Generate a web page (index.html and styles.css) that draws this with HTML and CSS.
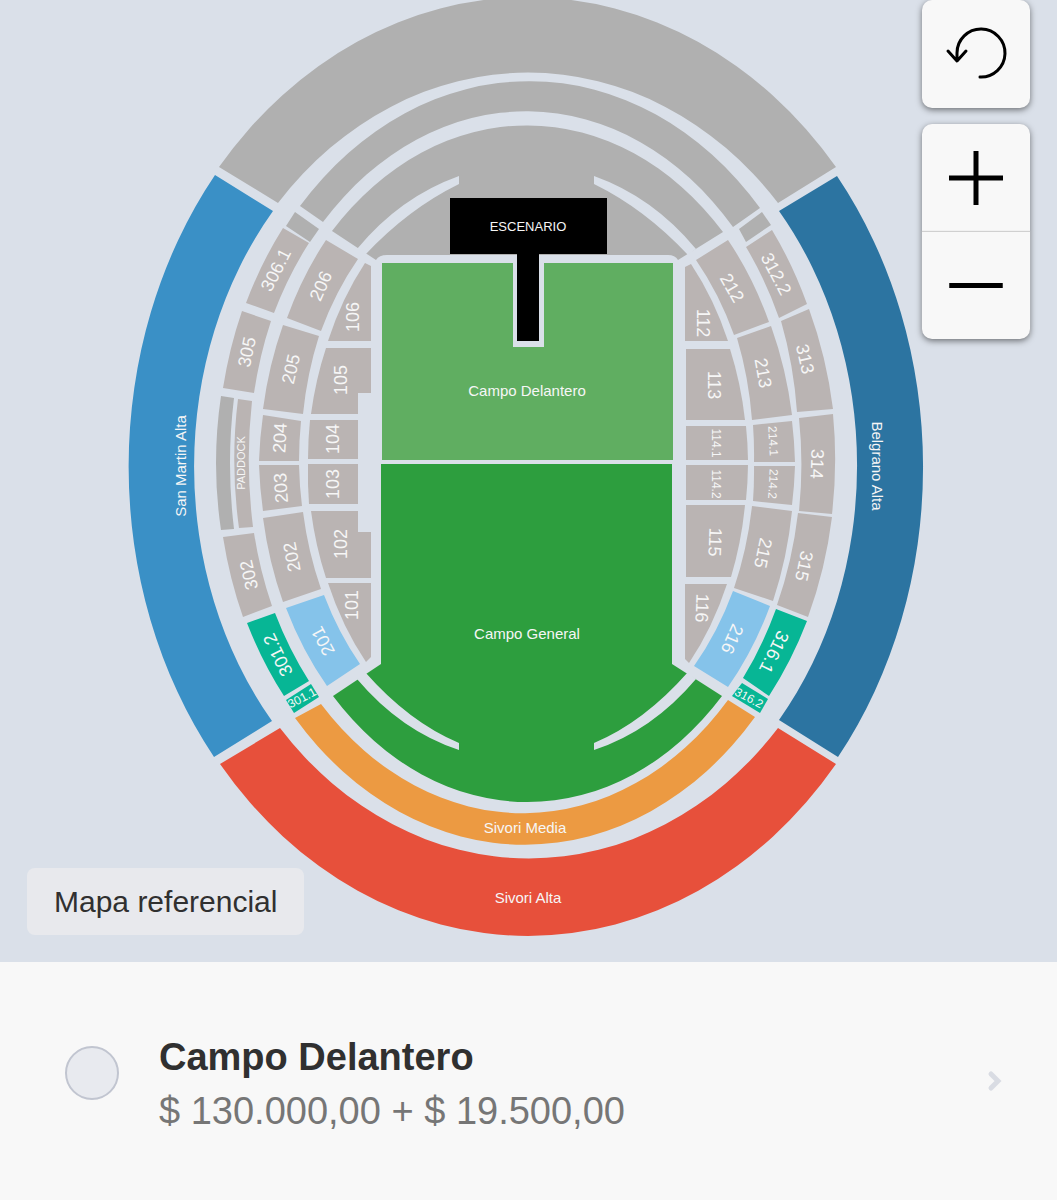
FILE: index.html
```html
<!DOCTYPE html>
<html lang="es">
<head>
    <meta charset="UTF-8">
    <meta name="viewport" content="width=device-width, initial-scale=1.0">
    <title>Mapa de sectores</title>
    <link rel="stylesheet" href="styles.css">
</head>
<body>
    <main>
        <section class="map">
            <svg class="stadium" viewBox="0 0 1057 962" role="img" aria-label="Mapa del estadio">
                <!-- Sectores no disponibles -->
                <g class="off">
                    <path d="M219 167A401 470 0 0 1 836 167L778 203A336 393 0 0 0 278 203Z"/>
                    <path d="M300 206A311 385 0 0 1 760 208L733 227A280 355 0 0 0 323 222Z"/>
                    <path d="M332 231A270 342 0 0 1 723 232L678 260Q675 255 668 255H387Q379 255 376 260Z"/>
                    <path d="M295 212L319 229L310 242L286 226Z"/>
                    <path d="M762 212L771 225L746 242L739 229Z"/>
                    <path d="M221 396L234 398Q226 463 234 529L221 530Q211 463 221 396Z"/>
                </g>

                <!-- Tribunas altas y medias -->
                <path class="san-martin" d="M215 175A398 469 0 0 0 214 757L272 721A328 393 0 0 1 273 211Z"/>
                <path class="belgrano" d="M837 176A398 469 0 0 1 838 757L779 720A328 393 0 0 0 779 211Z"/>
                <path class="sivori-alta" d="M220 764A399 472 0 0 0 836 764L778 728A335 394 0 0 1 280 728Z"/>
                <path class="sivori-media" d="M295 718A310 386 0 0 0 755 717L728 700A280 355 0 0 1 321 704Z"/>

                <!-- Plateas San Martin -->
                <g class="seats">
                    <path d="M283 228L309 243A280 355 0 0 0 274 313L246 303A311 385 0 0 1 283 228Z"/>
                    <path d="M242 311L271 321A280 355 0 0 0 254 393L223 388A311 385 0 0 1 242 311Z"/>
                    <path d="M238 399L252 401Q245 463 253 527L239 528Q230 463 238 399Z"/>
                    <path d="M223 537L254 533A280 355 0 0 0 272 606L243 617A311 385 0 0 1 223 537Z"/>
                    <path d="M326 240L358 259A228 304 0 0 0 321 331L287 318A268 342 0 0 1 326 240Z"/>
                    <path d="M283 325L319 336A228 304 0 0 0 303 414L263 409A268 342 0 0 1 283 325Z"/>
                    <path d="M263 415L301 421A228 304 0 0 0 299 461H259A268 342 0 0 1 263 415Z"/>
                    <path d="M259 465H299A228 304 0 0 0 302 506L263 511A268 342 0 0 1 259 465Z"/>
                    <path d="M263 518L303 512A228 304 0 0 0 321 589L283 602A268 342 0 0 1 263 518Z"/>
                    <path d="M365 263L371 266V341H328A220 294 0 0 1 365 263Z"/>
                    <path d="M326 348H371V393H358V414H311A220 294 0 0 1 326 348Z"/>
                    <path d="M310 420H358V459H308A220 294 0 0 1 310 420Z"/>
                    <path d="M308 464H358V504H309A220 294 0 0 1 308 464Z"/>
                    <path d="M311 511H358V532H371V578H326A220 294 0 0 1 311 511Z"/>
                    <path d="M328 583H371V657L366 662A220 294 0 0 1 328 583Z"/>
                </g>

                <!-- Plateas Belgrano -->
                <g class="seats">
                    <path d="M772 230A311 385 0 0 1 807 304L779 318A280 355 0 0 0 746 247Z"/>
                    <path d="M809 309A311 385 0 0 1 833 409L797 412A280 355 0 0 0 781 321Z"/>
                    <path d="M833 414A311 385 0 0 1 832 514L799 511A280 355 0 0 0 799 418Z"/>
                    <path d="M832 517A311 385 0 0 1 808 617L777 605A280 355 0 0 0 798 513Z"/>
                    <path d="M728 240A268 342 0 0 1 769 322L734 335A228 304 0 0 0 696 260Z"/>
                    <path d="M771 326A268 342 0 0 1 792 415L752 420A228 304 0 0 0 737 338Z"/>
                    <path d="M792 421A268 342 0 0 1 795 462H754A228 304 0 0 0 753 425Z"/>
                    <path d="M795 466A268 342 0 0 1 792 505L753 501A228 304 0 0 0 754 466Z"/>
                    <path d="M792 511A268 342 0 0 1 773 601L734 588A228 304 0 0 0 752 506Z"/>
                    <path d="M685 267L691 264A220 294 0 0 1 728 341H685Z"/>
                    <path d="M686 349H730A220 294 0 0 1 745 420H686Z"/>
                    <path d="M686 426H746A220 294 0 0 1 748 460H686Z"/>
                    <path d="M686 465H748A220 294 0 0 1 746 500H686Z"/>
                    <path d="M686 505H745A220 294 0 0 1 731 577H686Z"/>
                    <path d="M685 584H727A220 294 0 0 1 689 663L685 659Z"/>
                </g>

                <g class="platea-baja">
                    <path d="M286 608L324 595A228 304 0 0 0 360 664L327 686A268 342 0 0 1 286 608Z"/>
                    <path d="M733 591L770 606A268 342 0 0 1 728 687L694 666A228 304 0 0 0 733 591Z"/>
                </g>
                <g class="platea-media">
                    <path d="M247 623L275 613A280 355 0 0 0 309 681L284 696A311 385 0 0 1 247 623Z"/>
                    <path d="M286 700L311 684L319 697L294 713Z"/>
                    <path d="M776 609L807 621A311 385 0 0 1 769 696L743 678A280 355 0 0 0 776 609Z"/>
                    <path d="M742 683L768 699L760 713L732 696Z"/>
                </g>

                <!-- Campo y escenario -->
                <path class="delantero" d="M382 263H513V347H544V263H673V460H382Z"/>
                <path class="general" d="M381 464H672V664L722 696A269 343 0 0 1 333 696L381 664Z"/>
                <g class="rail">
                    <path d="M357 249Q400 197 459 176V184Q408 209 365 255Z"/>
                    <path d="M696 249Q653 197 594 176V184Q645 209 688 255Z"/>
                    <path d="M357 679Q401 731 459 750V743Q409 722 365 672Z"/>
                    <path d="M696 679Q652 731 594 750V743Q644 722 688 672Z"/>
                </g>
                <path class="stage" d="M450 198H607V254H539V341H517V254H450Z"/>

                <g class="label">
                    <text x="527" y="390">Campo Delantero</text>
                    <text x="527" y="633">Campo General</text>
                    <text x="525" y="827">Sivori Media</text>
                    <text x="528" y="897">Sivori Alta</text>
                    <text transform="translate(180 466) rotate(-90)">San Martin Alta</text>
                    <text transform="translate(877 466) rotate(90)">Belgrano Alta</text>
                </g>
                <text class="label label-stage" x="528" y="226">ESCENARIO</text>

                <g class="label label-seat">
                    <text transform="translate(276 270) rotate(-63)">306.1</text>
                    <text transform="translate(247 352) rotate(-78)">305</text>
                    <text transform="translate(249 575) rotate(-103)">302</text>
                    <text transform="translate(278 655) rotate(-116)">301.2</text>
                    <text transform="translate(321 286) rotate(-66)">206</text>
                    <text transform="translate(291 369) rotate(-77)">205</text>
                    <text transform="translate(280 438) rotate(-87)">204</text>
                    <text transform="translate(281 488) rotate(-94)">203</text>
                    <text transform="translate(292 557) rotate(-101)">202</text>
                    <text transform="translate(323 641) rotate(-118)">201</text>
                    <text transform="translate(353 317) rotate(-90)">106</text>
                    <text transform="translate(341 380) rotate(-90)">105</text>
                    <text transform="translate(333 439) rotate(-90)">104</text>
                    <text transform="translate(333 484) rotate(-90)">103</text>
                    <text transform="translate(341 544) rotate(-90)">102</text>
                    <text transform="translate(352 605) rotate(-90)">101</text>
                    <text transform="translate(776 274) rotate(62)">312.2</text>
                    <text transform="translate(805 359) rotate(77)">313</text>
                    <text transform="translate(817 464) rotate(92)">314</text>
                    <text transform="translate(804 566) rotate(102)">315</text>
                    <text transform="translate(774 652) rotate(116)">316.1</text>
                    <text transform="translate(732 288) rotate(60)">212</text>
                    <text transform="translate(763 373) rotate(80)">213</text>
                    <text transform="translate(763 553) rotate(102)">215</text>
                    <text transform="translate(732 639) rotate(114)">216</text>
                    <text transform="translate(703 323) rotate(90)">112</text>
                    <text transform="translate(714 385) rotate(90)">113</text>
                    <text transform="translate(715 542) rotate(92)">115</text>
                    <text transform="translate(702 608) rotate(92)">116</text>
                </g>
                <g class="label label-small">
                    <text transform="translate(302 698) rotate(-28)">301.1</text>
                    <text transform="translate(749 698) rotate(28)">316.2</text>
                    <text transform="translate(716 443) rotate(90)">114.1</text>
                    <text transform="translate(716 484) rotate(90)">114.2</text>
                    <text transform="translate(773 441) rotate(87)">214.1</text>
                    <text transform="translate(773 484) rotate(93)">214.2</text>
                </g>
                <text class="label label-paddock" transform="translate(241 463) rotate(-90)">PADDOCK</text>
            </svg>

            <div class="controls">
                <div class="control-group">
                    <button class="control" type="button" aria-label="Restablecer">
                        <svg viewBox="0 0 108 108">
                            <path class="thin" d="M58 77A24 24 0 1 0 35 53V60M26 51L35 61L44 51"/>
                        </svg>
                    </button>
                </div>
                <div class="control-group">
                    <button class="control" type="button" aria-label="Acercar">
                        <svg viewBox="0 0 108 108"><path d="M27 54H81M54 27V81"/></svg>
                    </button>
                    <button class="control" type="button" aria-label="Alejar">
                        <svg viewBox="0 0 108 108"><path d="M27 54H81"/></svg>
                    </button>
                </div>
            </div>

            <div class="map-note">Mapa referencial</div>
        </section>

        <section class="sectors">
            <label class="sector">
                <input class="sector-radio" type="radio" name="sector">
                <span class="sector-info">
                    <span class="sector-name">Campo Delantero</span>
                    <span class="sector-price">$ 130.000,00 + $ 19.500,00</span>
                </span>
                <svg class="chevron" viewBox="0 0 16 22"><path d="M4 4L11 11L4 18"/></svg>
            </label>
        </section>
    </main>
</body>
</html>
```
FILE: styles.css
```css
* {
    box-sizing: border-box;
}
body {
    margin: 0;
    font-family: 'Liberation Sans', Helvetica, Arial, sans-serif;
    color: #303030;
    background-color: #f8f8f8;
}

/* Mapa */
.map {
    position: relative;
    background-color: #dae0e9;
}
.stadium {
    display: block;
    width: 100%;
    height: auto;
}
.off {
    fill: #b0b0b0;
}
.seats {
    fill: #bab4b3;
}
.san-martin {
    fill: #3a90c6;
}
.belgrano {
    fill: #2c74a1;
}
.sivori-alta {
    fill: #e7503b;
}
.sivori-media {
    fill: #ec9a42;
}
.platea-baja {
    fill: #85c3ea;
}
.platea-media {
    fill: #07b695;
}
.delantero {
    fill: #60ae61;
}
.general {
    fill: #2d9e3e;
}
.stage {
    fill: #000;
}
.rail {
    fill: #dae0e9;
}
.label {
    fill: #f6f6f6;
    font-size: 15px;
    text-anchor: middle;
    dominant-baseline: central;
}
.label-stage {
    font-size: 13px;
}
.label-seat {
    font-size: 18px;
}
.label-small {
    font-size: 12px;
}
.label-paddock {
    font-size: 11px;
}

/* Controles */
.controls {
    position: absolute;
    top: 0;
    right: 27px;
    display: flex;
    flex-direction: column;
    gap: 16px;
}
.control-group {
    display: flex;
    flex-direction: column;
    border-radius: 10px;
    background-color: #f8f8f8;
    box-shadow: 0 2px 6px rgba(0,0,0,0.5);
}
.control {
    display: block;
    width: 108px;
    height: 108px;
    padding: 0;
    border: 0;
    background: none;
    cursor: pointer;
}
.control + .control {
    height: 107px;
    box-shadow: 0 -1px 1px #d0d0d0;
}
.control svg {
    display: block;
    width: 100%;
    height: 100%;
    fill: none;
    stroke: #000;
    stroke-width: 5;
}
.control .thin {
    stroke-width: 3;
    stroke-linecap: round;
    stroke-linejoin: round;
}
.map-note {
    position: absolute;
    left: 27px;
    bottom: 27px;
    padding: 0 27px;
    border-radius: 8px;
    font-size: 30px;
    line-height: 67px;
    background-color: #e8e9ed;
}

/* Lista de sectores */
.sectors {
    background-color: #f8f8f8;
}
.sector {
    display: flex;
    align-items: center;
    gap: 40px;
    padding: 68px 54px 62px 65px;
    cursor: pointer;
}
.sector-radio {
    appearance: none;
    flex: none;
    width: 54px;
    height: 54px;
    margin: 0 0 22px;
    border: 2px solid #c1c5d0;
    border-radius: 50%;
    background-color: #e8eaef;
}
.sector-radio:checked {
    background-color: #3a90c6;
}
.sector-info {
    flex: 1;
    display: flex;
    flex-direction: column;
    font-size: 38px;
    line-height: 54px;
}
.sector-name {
    font-weight: bold;
}
.sector-price {
    color: #767676;
}
.chevron {
    flex: none;
    width: 16px;
    height: 22px;
    margin-bottom: 6px;
    fill: none;
    stroke: #d9dce3;
    stroke-width: 5;
    stroke-linecap: round;
}
```
